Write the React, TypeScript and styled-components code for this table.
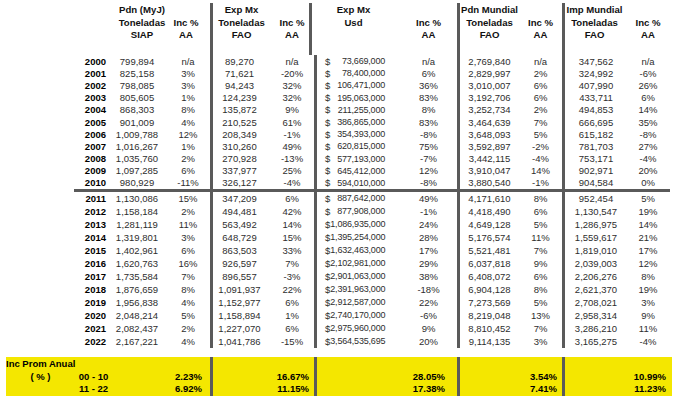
import React from "react";
import styled, { createGlobalStyle } from "styled-components";

const Global = createGlobalStyle`
  html, body { margin: 0; padding: 0; background: #fff; }
  body { font-family: "Liberation Sans", Arial, sans-serif; }
`;

const COLS = "112px 50px 48px 60px 44px 86px 57px 62px 43px 62px 48px";
const LINE = "#5a5a5a";

const Page = styled.div`
  width: 679px;
  height: 404px;
  padding-top: 3px;
  box-sizing: border-box;
  background: #fff;
  overflow: hidden;
`;

const Grid = styled.div<{ $h: number }>`
  display: grid;
  grid-template-columns: ${COLS};
  height: ${(p) => p.$h}px;
`;

const HeadCell = styled.div<{ $sep?: boolean; $skip?: number; $dx?: number }>`
  display: flex;
  flex-direction: column;
  align-items: center;
  box-sizing: border-box;
  padding-top: ${(p) => 1 + (p.$skip || 0) * 12.5}px;
  border-left: ${(p) => (p.$sep ? `3px solid ${LINE}` : "none")};
  font-size: 9.6px;
  font-weight: bold;
  color: #111;
  line-height: 12.5px;
  white-space: nowrap;
  transform: translateX(${(p) => p.$dx || 0}px);
`;

const Cell = styled.div<{
  $sep?: boolean;
  $align?: "center" | "right" | "left";
  $pr?: number;
  $pl?: number;
  $bold?: boolean;
}>`
  display: flex;
  align-items: center;
  justify-content: ${(p) =>
    p.$align === "right" ? "flex-end" : p.$align === "left" ? "flex-start" : "center"};
  box-sizing: border-box;
  padding-right: ${(p) => p.$pr || 0}px;
  padding-left: ${(p) => p.$pl || 0}px;
  border-left: ${(p) => (p.$sep ? `3px solid ${LINE}` : "none")};
  font-size: 9.5px;
  font-weight: ${(p) => (p.$bold ? "bold" : "normal")};
  color: ${(p) => (p.$bold ? "#000" : "#2e2e2e")};
  white-space: nowrap;
`;

const UsdCell = styled(Cell)`
  justify-content: space-between;
`;

const UsdValue = styled.span`
  font-size: 9px;
  letter-spacing: -0.2px;
`;

const Divider = styled.div`
  margin-left: 74px;
  width: 596px;
  height: 2.6px;
  background: ${LINE};
`;

const Band = styled.div`
  margin-top: 9.5px;
  margin-left: 6px;
  width: 666px;
  height: 39px;
  background: #f4e700;
  display: grid;
  grid-template-columns: 69px 37px 98px 104px 143px 105px 110px;
`;

const BandCol = styled.div<{ $sep?: boolean; $align?: "center" | "right"; $pr?: number }>`
  display: flex;
  flex-direction: column;
  align-items: ${(p) => (p.$align === "right" ? "flex-end" : "center")};
  box-sizing: border-box;
  padding-top: 1px;
  padding-right: ${(p) => p.$pr || 0}px;
  border-left: ${(p) => (p.$sep ? `3px solid ${LINE}` : "none")};
`;

const BandLine = styled.div<{ $left?: boolean }>`
  height: 12.5px;
  line-height: 12.5px;
  font-size: 9.5px;
  font-weight: bold;
  color: #000;
  white-space: nowrap;
  align-self: ${(p) => (p.$left ? "flex-start" : "auto")};
`;

type Row = [string, string, string, string, string, string, string, string, string, string, string];

const top: Row[] = [
  ["2000", "799,894", "n/a", "89,270", "n/a", "73,669,000", "n/a", "2,769,840", "n/a", "347,562", "n/a"],
  ["2001", "825,158", "3%", "71,621", "-20%", "78,400,000", "6%", "2,829,997", "2%", "324,992", "-6%"],
  ["2002", "798,085", "3%", "94,243", "32%", "106,471,000", "36%", "3,010,007", "6%", "407,990", "26%"],
  ["2003", "805,605", "1%", "124,239", "32%", "195,063,000", "83%", "3,192,706", "6%", "433,711", "6%"],
  ["2004", "868,303", "8%", "135,872", "9%", "211,255,000", "8%", "3,252,734", "2%", "494,853", "14%"],
  ["2005", "901,009", "4%", "210,525", "61%", "386,865,000", "83%", "3,464,639", "7%", "666,695", "35%"],
  ["2006", "1,009,788", "12%", "208,349", "-1%", "354,393,000", "-8%", "3,648,093", "5%", "615,182", "-8%"],
  ["2007", "1,016,267", "1%", "310,260", "49%", "620,815,000", "75%", "3,592,897", "-2%", "781,703", "27%"],
  ["2008", "1,035,760", "2%", "270,928", "-13%", "577,193,000", "-7%", "3,442,115", "-4%", "753,171", "-4%"],
  ["2009", "1,097,285", "6%", "337,977", "25%", "645,412,000", "12%", "3,910,047", "14%", "902,971", "20%"],
  ["2010", "980,929", "-11%", "326,127", "-4%", "594,010,000", "-8%", "3,880,540", "-1%", "904,584", "0%"],
];

const bottom: Row[] = [
  ["2011", "1,130,086", "15%", "347,209", "6%", "887,642,000", "49%", "4,171,610", "8%", "952,454", "5%"],
  ["2012", "1,158,184", "2%", "494,481", "42%", "877,908,000", "-1%", "4,418,490", "6%", "1,130,547", "19%"],
  ["2013", "1,281,119", "11%", "563,492", "14%", "1,086,935,000", "24%", "4,649,128", "5%", "1,286,975", "14%"],
  ["2014", "1,319,801", "3%", "648,729", "15%", "1,395,254,000", "28%", "5,176,574", "11%", "1,559,617", "21%"],
  ["2015", "1,402,961", "6%", "863,503", "33%", "1,632,463,000", "17%", "5,521,481", "7%", "1,819,010", "17%"],
  ["2016", "1,620,763", "16%", "926,597", "7%", "2,102,981,000", "29%", "6,037,818", "9%", "2,039,003", "12%"],
  ["2017", "1,735,584", "7%", "896,557", "-3%", "2,901,063,000", "38%", "6,408,072", "6%", "2,206,276", "8%"],
  ["2018", "1,876,659", "8%", "1,091,937", "22%", "2,391,963,000", "-18%", "6,904,128", "8%", "2,621,370", "19%"],
  ["2019", "1,956,838", "4%", "1,152,977", "6%", "2,912,587,000", "22%", "7,273,569", "5%", "2,708,021", "3%"],
  ["2020", "2,048,214", "5%", "1,158,894", "1%", "2,740,170,000", "-6%", "8,219,048", "13%", "2,958,314", "9%"],
  ["2021", "2,082,437", "2%", "1,227,070", "6%", "2,975,960,000", "9%", "8,810,452", "7%", "3,286,210", "11%"],
  ["2022", "2,167,221", "4%", "1,041,786", "-15%", "3,564,535,695", "20%", "9,114,135", "3%", "3,165,275", "-4%"],
];

function DataRow({ r, h }: { r: Row; h: number }) {
  return (
    <Grid $h={h}>
      <Cell $align="right" $pr={6} $bold>{r[0]}</Cell>
      <Cell>{r[1]}</Cell>
      <Cell $pl={4}>{r[2]}</Cell>
      <Cell $sep $pr={4}>{r[3]}</Cell>
      <Cell>{r[4]}</Cell>
      <UsdCell $sep $pl={8} $pr={15}>
        <span>$</span>
        <UsdValue>{r[5]}</UsdValue>
      </UsdCell>
      <Cell>{r[6]}</Cell>
      <Cell $sep>{r[7]}</Cell>
      <Cell>{r[8]}</Cell>
      <Cell $sep $pl={3}>{r[9]}</Cell>
      <Cell>{r[10]}</Cell>
    </Grid>
  );
}

const bandCols: { lines: string[]; pr: number }[] = [
  { lines: ["", "16.67%", "11.15%"], pr: 5 },
  { lines: ["", "28.05%", "17.38%"], pr: 12 },
  { lines: ["", "3.54%", "7.41%"], pr: 5 },
  { lines: ["", "10.99%", "11.23%"], pr: 6 },
];

export default function App() {
  return (
    <Page>
      <Global />
      <Grid $h={52}>
        <HeadCell />
        <HeadCell $dx={5}>
          <span>Pdn (MyJ)</span>
          <span>Toneladas</span>
          <span>SIAP</span>
        </HeadCell>
        <HeadCell $skip={1}>
          <span>Inc %</span>
          <span>AA</span>
        </HeadCell>
        <HeadCell $sep>
          <span>Exp Mx</span>
          <span>Toneladas</span>
          <span>FAO</span>
        </HeadCell>
        <HeadCell $skip={1}>
          <span>Inc %</span>
          <span>AA</span>
        </HeadCell>
        <HeadCell $sep $dx={-5}>
          <span>Exp Mx</span>
          <span>Usd</span>
        </HeadCell>
        <HeadCell $skip={1}>
          <span>Inc %</span>
          <span>AA</span>
        </HeadCell>
        <HeadCell $sep>
          <span>Pdn Mundial</span>
          <span>Toneladas</span>
          <span>FAO</span>
        </HeadCell>
        <HeadCell $skip={1}>
          <span>Inc %</span>
          <span>AA</span>
        </HeadCell>
        <HeadCell $sep>
          <span>Imp Mundial</span>
          <span>Toneladas</span>
          <span>FAO</span>
        </HeadCell>
        <HeadCell $skip={1}>
          <span>Inc %</span>
          <span>AA</span>
        </HeadCell>
      </Grid>
      {top.map((r) => (
        <DataRow key={r[0]} r={r} h={12.2} />
      ))}
      <Divider />
      {bottom.map((r) => (
        <DataRow key={r[0]} r={r} h={13} />
      ))}
      <Band>
        <BandCol>
          <BandLine $left>Inc Prom Anual</BandLine>
          <BandLine>( % )</BandLine>
          <BandLine />
        </BandCol>
        <BandCol>
          <BandLine />
          <BandLine>00 - 10</BandLine>
          <BandLine>11 - 22</BandLine>
        </BandCol>
        <BandCol $align="right" $pr={8}>
          <BandLine />
          <BandLine>2.23%</BandLine>
          <BandLine>6.92%</BandLine>
        </BandCol>
        {bandCols.map((c, i) => (
          <BandCol key={i} $sep $align="right" $pr={c.pr}>
            {c.lines.map((l, j) => (
              <BandLine key={j}>{l}</BandLine>
            ))}
          </BandCol>
        ))}
      </Band>
    </Page>
  );
}
